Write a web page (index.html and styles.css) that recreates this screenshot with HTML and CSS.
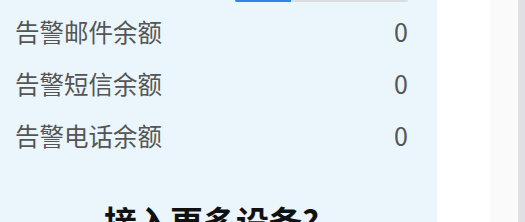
FILE: index.html
```html
<!DOCTYPE html>
<html lang="zh-CN">
<head>
    <meta charset="UTF-8">
    <title>告警余额</title>
    <link rel="stylesheet" href="styles.css">
</head>
<body>
    <div class="page">
        <div class="panel">
            <div class="progress">
                <div class="progress-fill"></div>
            </div>

            <div class="balance-row">
                <span class="label">告警邮件余额</span>
                <span class="value">0</span>
            </div>
            <div class="balance-row">
                <span class="label">告警短信余额</span>
                <span class="value">0</span>
            </div>
            <div class="balance-row">
                <span class="label">告警电话余额</span>
                <span class="value">0</span>
            </div>

            <h2 class="more-title">接入更多设备?</h2>
        </div>
        <div class="gap"></div>
        <div class="side"></div>
        <div class="scroll-edge"></div>
    </div>
</body>
</html>
```

FILE: styles.css
```css
/* Basic Styling */
body {
    margin: 0;
    font-family: "Noto Sans CJK SC", "Noto Sans", sans-serif;
    background-color: #fff;
    height: 222px;
    overflow: hidden;
}

.page {
    display: flex;
    height: 222px;
}

.panel {
    width: 437px;
    background-color: #eaf5fc;
    padding: 0 29px 0 15px;
    box-sizing: border-box;
    flex-shrink: 0;
}

.progress {
    width: 173px;
    height: 2px;
    margin-left: auto;
    background-color: #dcdde0;
    border-radius: 0 0 2px 2px;
    overflow: hidden;
    margin-bottom: 3px;
}

.progress-fill {
    width: 56px;
    height: 100%;
    background-color: #2a86e0;
}

.balance-row {
    display: flex;
    justify-content: space-between;
    align-items: center;
    height: 52px;
    font-size: 24.5px;
    color: #555;
}

.value {
    font-size: 25px;
}

.more-title {
    margin: 38px 0 0;
    text-align: center;
    font-size: 33px;
    font-weight: bold;
    line-height: 45px;
    color: #111;
}

.gap {
    width: 53px;
    background-color: #fff;
}

.side {
    width: 28px;
    background-color: #fafafa;
}

.scroll-edge {
    flex: 1;
    background-color: #e0e0e4;
}
```
